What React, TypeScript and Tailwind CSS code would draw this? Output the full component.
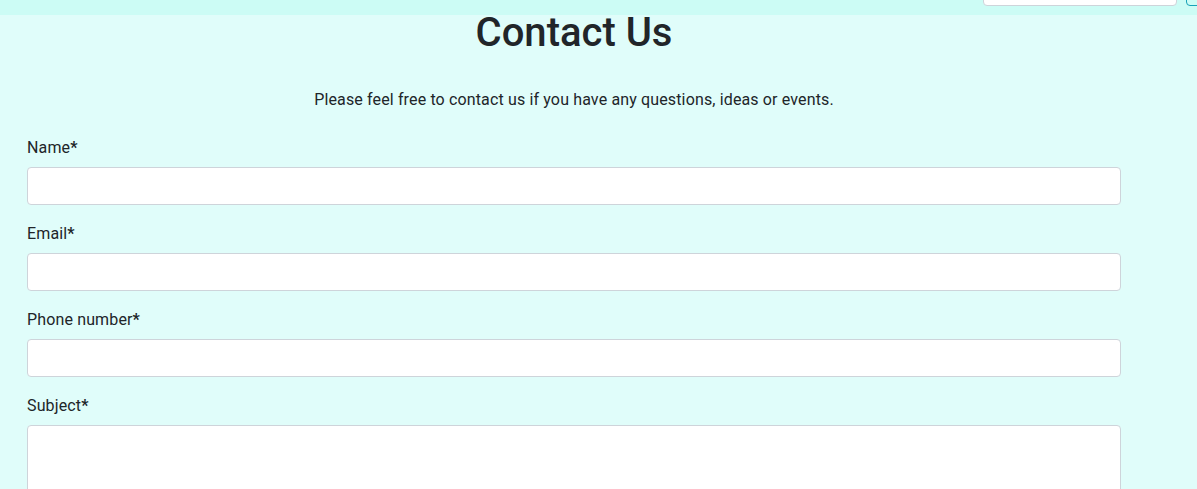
export default function App() {
  const fields = ["Name", "Email", "Phone number"];
  return (
    <div className="min-h-[489px] bg-[#e0fdfa] text-[#212529] overflow-hidden tracking-[0.14px]" style={{ fontFamily: "Roboto, 'Liberation Sans', sans-serif" }}>
      <div className="h-[15px] bg-[#ccfcf5] relative">
        <div className="absolute left-[983px] top-[-30px] w-[194px] h-[36px] bg-white border border-[#ced4da] rounded-[4px]" />
        <div className="absolute left-[1186px] top-[-30px] w-[60px] h-[36px] border border-[#17a2b8] rounded-[4px]" />
      </div>
      <div className="ml-[27px] w-[1094px]">
        <h1 className="text-center text-[40px] leading-[48px] mt-[-6px] font-medium tracking-normal">
          Contact Us
        </h1>
        <p className="text-center text-[16px] leading-[24px] mt-[31px]">
          Please feel free to contact us if you have any questions, ideas or events.
        </p>
        <div className="mt-[24px]">
          {fields.map((f) => (
            <div key={f} className="mb-[17px]">
              <label className="block text-[16px] leading-[24px] mb-[7px]">
                {f}
                <span className="font-bold">*</span>
              </label>
              <input className="block w-full h-[38px] bg-white border border-[#ced4da] rounded-[4px]" />
            </div>
          ))}
          <div>
            <label className="block text-[16px] leading-[24px] mb-[7px]">
              Subject<span className="font-bold">*</span>
            </label>
            <textarea className="block w-full h-[120px] bg-white border border-[#ced4da] rounded-[4px] resize-none" />
          </div>
        </div>
      </div>
    </div>
  );
}
